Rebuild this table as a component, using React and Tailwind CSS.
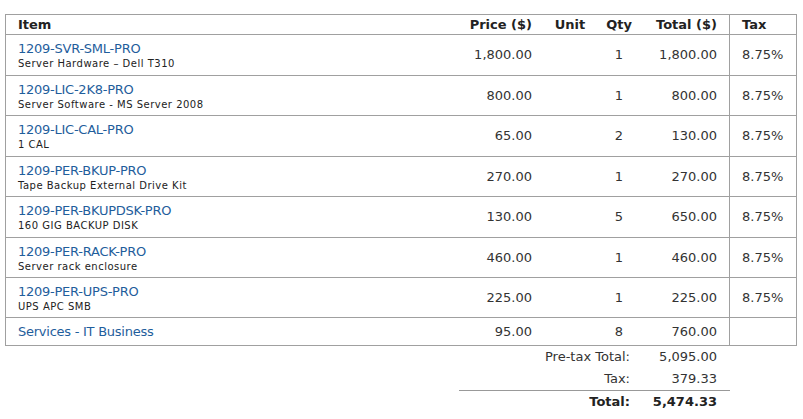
const items = [
  { code: '1209-SVR-SML-PRO', desc: 'Server Hardware – Dell T310', price: '1,800.00', qty: 1, total: '1,800.00', tax: '8.75%', h: 'h-[41px]' },
  { code: '1209-LIC-2K8-PRO', desc: 'Server Software - MS Server 2008', price: '800.00', qty: 1, total: '800.00', tax: '8.75%', h: 'h-[40px]' },
  { code: '1209-LIC-CAL-PRO', desc: '1 CAL', price: '65.00', qty: 2, total: '130.00', tax: '8.75%', h: 'h-[41px]' },
  { code: '1209-PER-BKUP-PRO', desc: 'Tape Backup External Drive Kit', price: '270.00', qty: 1, total: '270.00', tax: '8.75%', h: 'h-[40px]' },
  { code: '1209-PER-BKUPDSK-PRO', desc: '160 GIG BACKUP DISK', price: '130.00', qty: 5, total: '650.00', tax: '8.75%', h: 'h-[41px]' },
  { code: '1209-PER-RACK-PRO', desc: 'Server rack enclosure', price: '460.00', qty: 1, total: '460.00', tax: '8.75%', h: 'h-[40px]' },
  { code: '1209-PER-UPS-PRO', desc: 'UPS APC SMB', price: '225.00', qty: 1, total: '225.00', tax: '8.75%', h: 'h-[40px]' },
]

function Row({ item, last }) {
  return (
    <div className={`flex ${item.h} ${last ? '' : 'border-b border-[#a0a0a0]'}`}>
      <div className={`w-[434px] pl-[12px] ${item.desc ? 'pt-[6px]' : 'flex items-center'}`}>
        <div className="text-[13px] leading-[16px] tracking-[-0.25px] text-[#1f5e9c]">{item.code}</div>
        {item.desc && <div className="text-[10px] leading-[13px] tracking-[0.5px] text-[#222]">{item.desc}</div>}
      </div>
      <div className="w-[100px] pr-[8px] flex items-center justify-end text-[13px]">{item.price}</div>
      <div className="w-[60px]" />
      <div className="w-[38px] flex items-center justify-center text-[13px]">{item.qty}</div>
      <div className="w-[91px] pr-[12px] flex items-center justify-end text-[13px]">{item.total}</div>
      <div className="w-[67px] border-l border-[#a0a0a0] pl-[12px] flex items-center text-[13px]">{item.tax}</div>
    </div>
  )
}

export default function App() {
  return (
    <div className="bg-white w-[803px] h-[419px] pl-[5px] pt-[14px] font-['Verdana','DejaVu_Sans',sans-serif] text-[#333]">
      <div className="w-[792px] border border-[#a0a0a0]">
        <div className="flex h-[20px] border-b border-[#a0a0a0] text-[13px] font-bold leading-[19px] text-[#222]">
          <div className="w-[434px] pl-[12px]">Item</div>
          <div className="w-[100px] pr-[8px] text-right">Price ($)</div>
          <div className="w-[60px] text-center">Unit</div>
          <div className="w-[38px] text-center">Qty</div>
          <div className="w-[91px] pr-[12px] text-right">Total ($)</div>
          <div className="w-[67px] border-l border-[#a0a0a0] pl-[12px]">Tax</div>
        </div>
        {items.map((it) => (
          <Row key={it.code} item={it} />
        ))}
        <Row last item={{ code: 'Services - IT Business', desc: '', price: '95.00', qty: 8, total: '760.00', tax: '', h: 'h-[27px]' }} />
      </div>
      <div className="ml-[454px] w-[271px] text-[13px] leading-[22px]">
        <div className="flex">
          <div className="w-[171px] text-right">Pre-tax Total:</div>
          <div className="w-[87px] text-right">5,095.00</div>
        </div>
        <div className="flex border-b border-[#999]">
          <div className="w-[171px] text-right">Tax:</div>
          <div className="w-[87px] text-right">379.33</div>
        </div>
        <div className="flex font-bold text-[#222]">
          <div className="w-[171px] text-right">Total:</div>
          <div className="w-[87px] text-right">5,474.33</div>
        </div>
      </div>
    </div>
  )
}
